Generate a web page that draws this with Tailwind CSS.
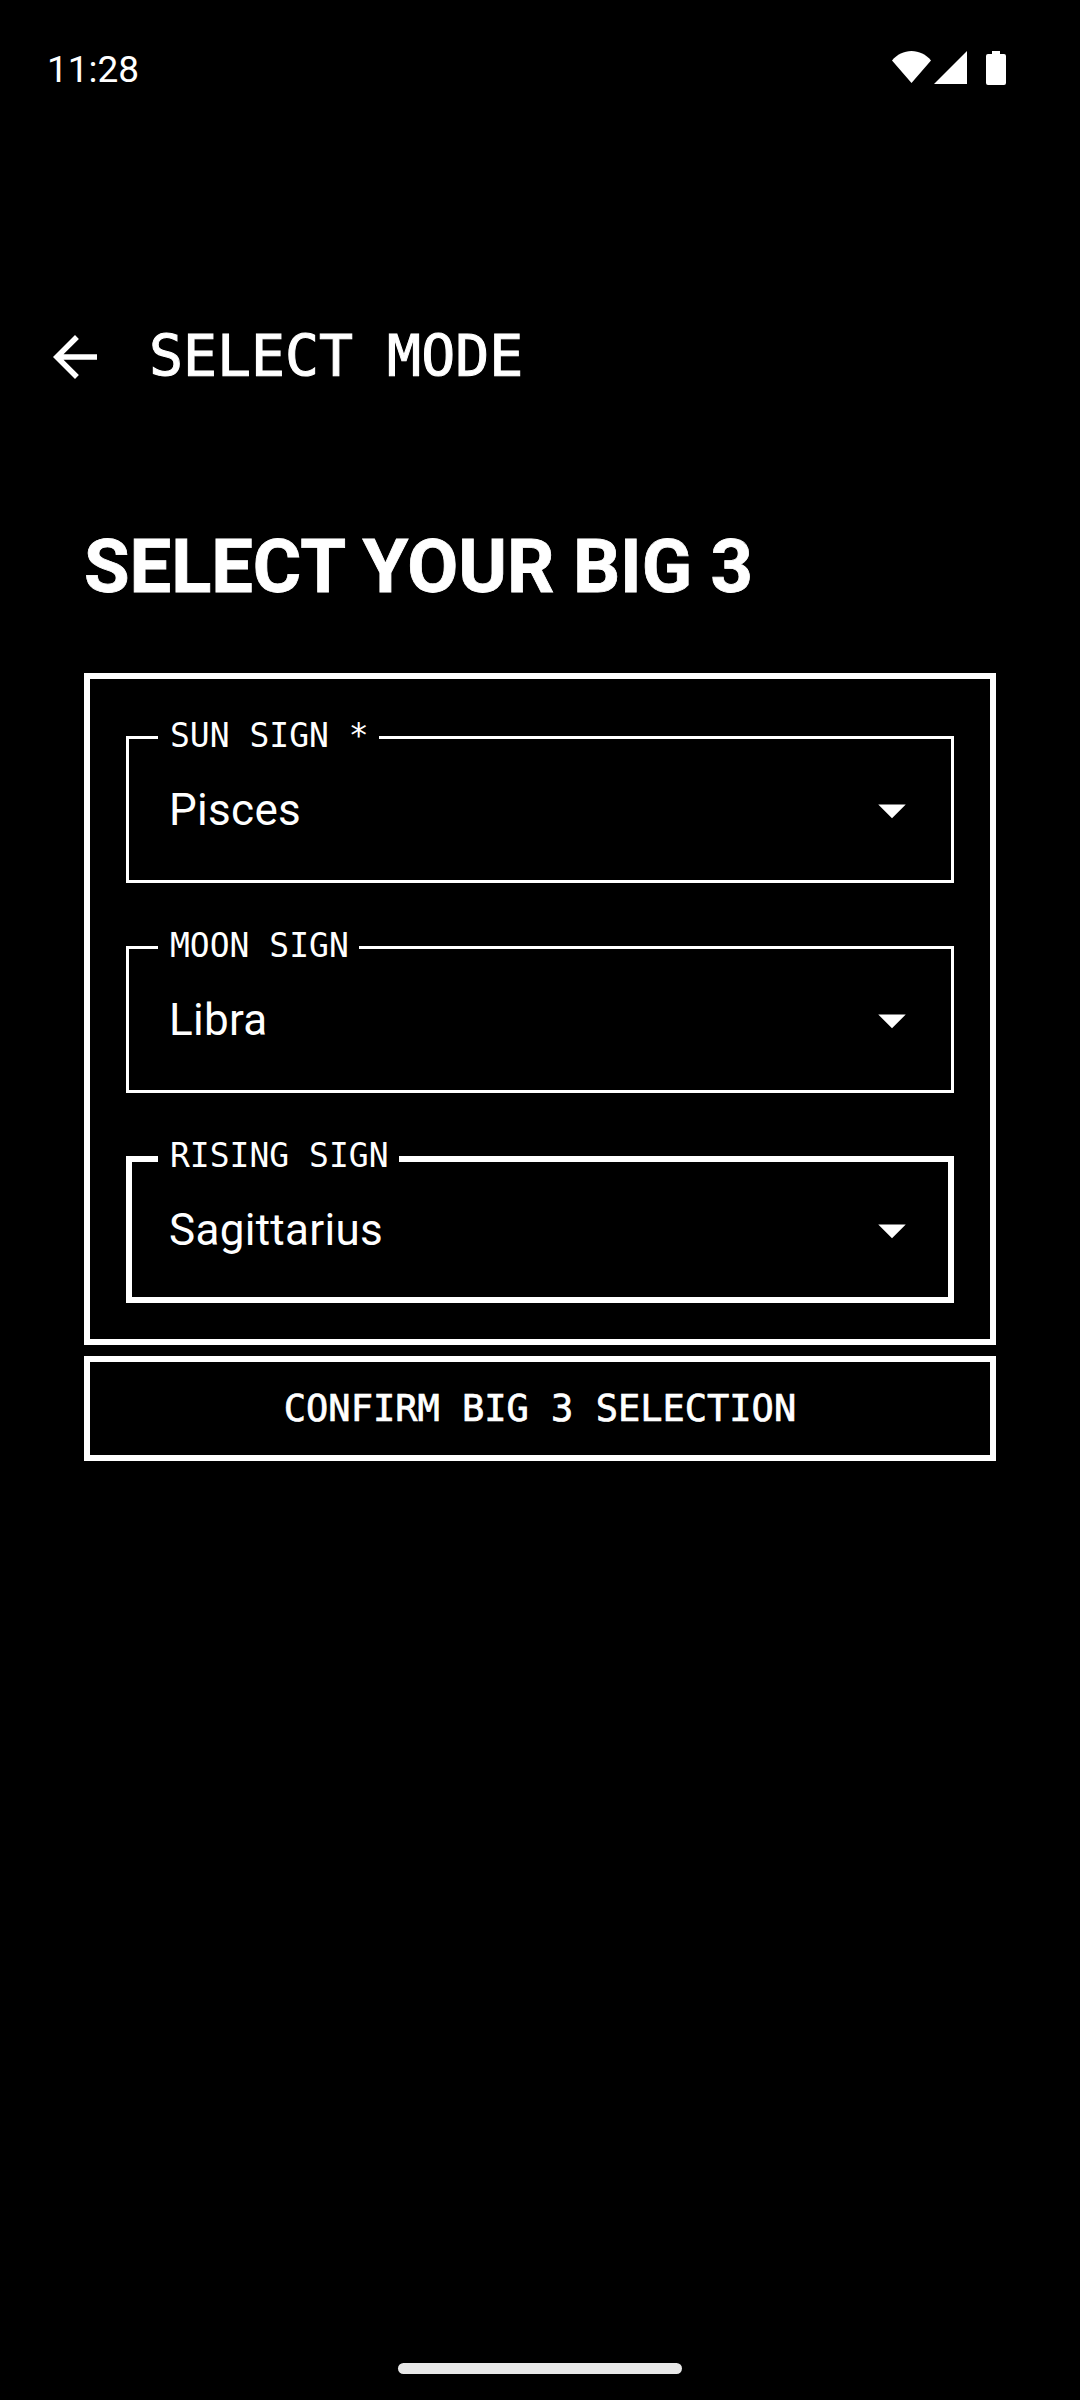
<!DOCTYPE html>
<html>
<head>
<meta charset="utf-8">
<script src="https://cdn.jsdelivr.net/npm/@tailwindcss/browser@4"></script>
</head>
<body class="bg-black">
<div class="w-[1080px] h-[2400px] bg-black text-white flex flex-col font-['Roboto',sans-serif]">
  <div class="h-[138px] flex items-start justify-between pt-[48px] pl-[47px] pr-[74px]">
    <span class="text-[37px] leading-[44px]">11:28</span>
    <div class="flex items-start pt-[3px]">
      <svg class="w-[39px] h-[32px]" viewBox="0 0 39 32"><path d="M19.5 32 0 9.5C5 3.5 12 0 19.5 0S34 3.500 39 9.500z" fill="#fff"/></svg>
      <svg class="w-[33px] h-[33px] ml-[3px]" viewBox="0 0 33 33"><path d="M33 0v33H0z" fill="#fff"/></svg>
      <svg class="w-[20px] h-[34px] ml-[19px]" viewBox="0 0 20 34"><path d="M6 0h8v3h4a2 2 0 0 1 2 2v27a2 2 0 0 1-2 2H2a2 2 0 0 1-2-2V5a2 2 0 0 1 2-2h4z" fill="#fff"/></svg>
    </div>
  </div>
  <div class="mt-[186px] h-[66px] flex items-center pl-[42px]">
    <svg class="w-[66px] h-[66px]" viewBox="0 0 24 24"><path d="M20 11H7.830l5.590-5.590L12 4l-8 8 8 8 1.410-1.410L7.830 13H20v-2z" fill="#fff"/></svg>
    <span class="ml-[41px] text-[56.500px] leading-[66px] [-webkit-text-stroke:1px_white] font-['DejaVu_Sans_Mono',monospace]">SELECT MODE</span>
  </div>
  <h1 class="mt-[132px] ml-[84px] text-[74px] leading-[90px] font-bold [-webkit-text-stroke:0.8px_white]">SELECT YOUR BIG 3</h1>
  <div class="mt-[61px] mx-[84px] border-[6px] border-white pt-[57px] px-[36px] pb-[36px] flex flex-col gap-[63px]">
    <div class="relative h-[147px] border-[3px] border-white flex items-center justify-between pl-[40px] pr-[26px]">
      <span class="absolute left-[29px] top-[-23px] bg-black pl-[12px] pr-[10px] text-[33px] leading-[40px] font-['DejaVu_Sans_Mono',monospace]">SUN SIGN *</span>
      <span class="text-[44px] leading-[52px] tracking-[0.3px]">Pisces</span>
      <svg class="w-[66px] h-[66px]" viewBox="0 0 24 24"><path d="M7 10l5 5 5-5z" fill="#fff"/></svg>
    </div>
    <div class="relative h-[147px] border-[3px] border-white flex items-center justify-between pl-[40px] pr-[26px]">
      <span class="absolute left-[29px] top-[-23px] bg-black pl-[12px] pr-[10px] text-[33px] leading-[40px] font-['DejaVu_Sans_Mono',monospace]">MOON SIGN</span>
      <span class="text-[44px] leading-[52px] tracking-[0.3px]">Libra</span>
      <svg class="w-[66px] h-[66px]" viewBox="0 0 24 24"><path d="M7 10l5 5 5-5z" fill="#fff"/></svg>
    </div>
    <div class="relative h-[147px] border-[6px] border-white flex items-center justify-between pl-[37px] pr-[23px]">
      <span class="absolute left-[26px] top-[-26px] bg-black pl-[12px] pr-[10px] text-[33px] leading-[40px] font-['DejaVu_Sans_Mono',monospace]">RISING SIGN</span>
      <span class="text-[44px] leading-[52px] tracking-[0.3px]">Sagittarius</span>
      <svg class="w-[66px] h-[66px]" viewBox="0 0 24 24"><path d="M7 10l5 5 5-5z" fill="#fff"/></svg>
    </div>
  </div>
  <div class="mt-[11px] mx-[84px] h-[105px] border-[6px] border-white flex items-center justify-center text-[37px] [-webkit-text-stroke:0.7px_white] font-['DejaVu_Sans_Mono',monospace]">CONFIRM BIG 3 SELECTION</div>
  <div class="mt-auto mb-[26px] mx-auto w-[284px] h-[11px] rounded-full bg-[#e8e8e8]"></div>
</div>
</body>
</html>
